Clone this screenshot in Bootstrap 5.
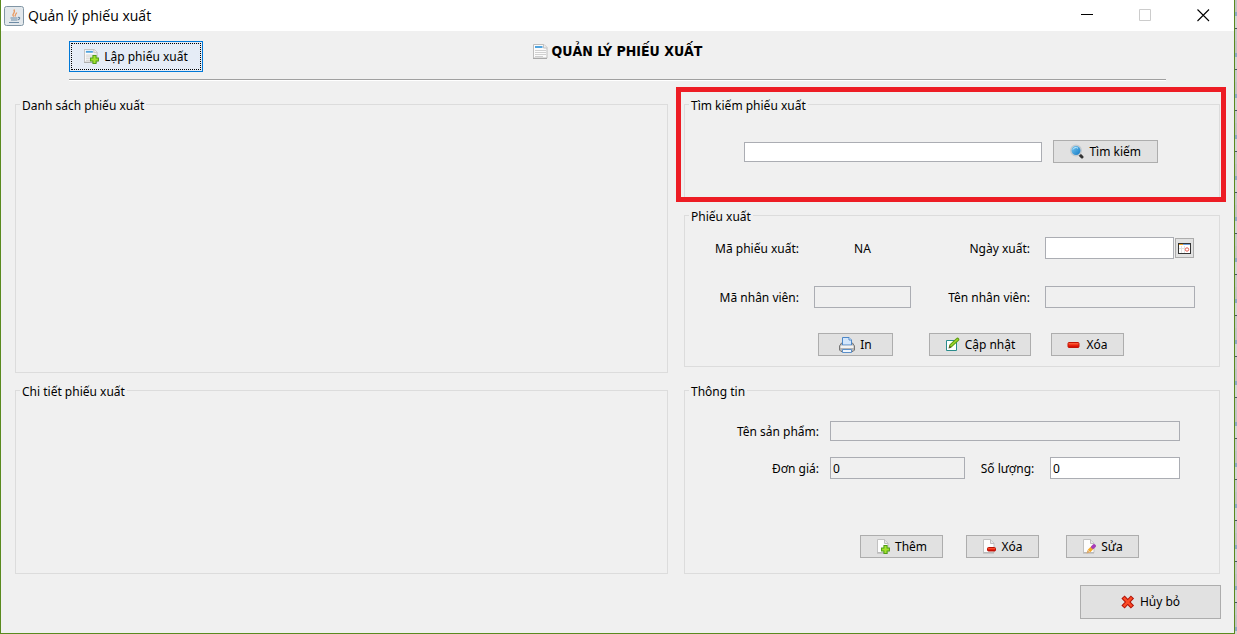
<!DOCTYPE html>
<html lang="vi">
<head>
<meta charset="utf-8">
<meta name="viewport" content="width=device-width, initial-scale=1">
<title>Quản lý phiếu xuất</title>
<link href="https://cdn.jsdelivr.net/npm/bootstrap@5.3.0/dist/css/bootstrap.min.css" rel="stylesheet">
<style>
  body {
    min-height: 100vh;
    padding-right: 2px;
    font: 12px/16px "Noto Sans", "DejaVu Sans", sans-serif;
    color: #000;
    background: repeating-linear-gradient(#c3c3c3 0 12px, #8fa9c4 12px 16px, #d4d4d4 16px 28px, #4b5560 28px 29px, #c8c8c8 29px 41px);
  }
  .app-window { min-height: 100vh; background: #f0f0f0; border: 1px solid #5a8a1e; border-top: 0; }
  .title-bar { height: 31px; background: #fff; padding: 0 2px 0 3px; }
  .title-text { font: 14px/20px "Open Sans", "Noto Sans", sans-serif; }
  .win-ctl { width: 58px; height: 31px; padding: 0; border: 0; background: none; display: grid; place-items: center; }
  .win-ctl:disabled { opacity: 1; }
  .tool-header { display: grid; grid-template-columns: 1fr auto 1fr; align-items: start; margin: 0 68px; padding: 10px 0 7px; border-bottom: 1px solid #a0a0a0; box-shadow: 0 1px #fff; }
  .page-heading { font: bold 14px/20px "DejaVu Sans Condensed", "DejaVu Sans", sans-serif; margin: 0; }
  .panels { display: grid; grid-template-columns: 653fr 536fr; column-gap: 16px; padding: 7px 14px 0; }
  .list-panel { margin-top: 8px; }
  fieldset.group { border: 1px solid #dcdcdc; }
  .group > legend { float: none; width: auto; margin: 0 0 0 4px; padding: 4px 2px 0; font-size: 12px; line-height: 14px; }
  .right-stack { padding-bottom: 6px; }
  .highlight { margin: 0 -6px 4px -8px; padding: 3px 1px 0 3px; border: 5px solid #ed1c24; }
  .highlight .group { border-bottom: 0; }
  .search-form { padding: 27px 61px 34px 59px; gap: 11px; }
  .slip-grid { display: grid; grid-template-columns: 100px 97fr 104px 150fr; gap: 27px 15px; padding: 13px 24px 0 14px; }
  .info-grid { display: grid; grid-template-columns: 100px 135fr 63px 130fr; gap: 16px 11px; padding: 22px 39px 0 34px; }
  .slip-grid > label, .slip-grid > span, .slip-grid > output, .info-grid > label { padding-top: 2px; }
  .span-rest { grid-column: span 3; }
  .form-control { min-width: 0; height: 22px; min-height: 0; padding: 0 2px; font-size: 12px; line-height: 16px; color: #000; background: #fff; border: 1px solid #abadb3; border-radius: 0; }
  .form-control[readonly] { background: #f0f0f0; }
  .form-control.slim { height: 20px; }
  .push { display: inline-flex; align-items: center; justify-content: center; gap: 5px; height: 23px; padding: 0; font-size: 12px; line-height: 16px; white-space: nowrap; color: #000; background: #e1e1e1; border: 1px solid #adadad; border-radius: 0; }
  .push svg, .page-heading svg { flex: none; }
  .push.w-a { width: 73px; }
  .push.w-in { width: 75px; }
  .push.w-b { width: 83px; }
  .push.w-c { width: 102px; flex: none; }
  .push.is-default { width: 134px; height: 31px; background: #e5ecf6; border-color: #0078d7; outline: 1px dotted #000; outline-offset: -3px; }
  .push.cancel { width: 141px; height: 34px; }
  .push.date-btn { width: 19px; height: 20px; margin: 0 1px; flex: none; }
  .slip-actions { padding: 25px 95px 10px 0; gap: 20px; }
  .slip-actions .w-in { margin-right: 16px; }
  .info-actions { padding: 56px 80px 15px 0; gap: 23px; }
  .bottom-bar { padding: 11px 13px 14px; }
</style>
</head>
<body>
<svg width="0" height="0" class="position-absolute" aria-hidden="true">
  <defs>
    <linearGradient id="lens" x1="0" y1="0" x2="1" y2="1"><stop offset="0" stop-color="#7fd0f7"/><stop offset="1" stop-color="#0a72c0"/></linearGradient>
    <linearGradient id="redbar" x1="0" y1="0" x2="0" y2="1"><stop offset="0" stop-color="#ff7a50"/><stop offset=".5" stop-color="#f02a10"/><stop offset="1" stop-color="#c80000"/></linearGradient>
    <symbol id="i-plus" viewBox="0 0 8 8"><path d="M2.600.5h2.800v2.100h2.100v2.800H5.400v2.100H2.600V5.400H.5V2.600h2.100z" fill="#a4e32c" stroke="#4f9c18" stroke-width=".9"/></symbol>
    <symbol id="i-doc" viewBox="0 0 15 15"><path d="M.5.5h10.500l3 3v10.500H.5z" fill="#fbfbfb" stroke="#bdbdbd"/><path d="M10.500.5v3.500h3.500" fill="#eee" stroke="#c0c0c0"/><path d="M2 2h7.500v2H2z" fill="#4fa3de"/><path d="M2 6.500h11M2 8.500h11M2 10.500h11M2 12.500h8" stroke="#d0d0d0"/><path d="M0 14.500h14" stroke="#a9a9a9"/></symbol>
    <symbol id="i-page" viewBox="0 0 14 15"><path d="M1.500.5h7l3.500 3.500v9.500H1.500z" fill="#fdfdfd" stroke="#c2c2c2"/><path d="M8.500.5v4h3.500" fill="#e6e6e6" stroke="#bdbdbd"/><path d="M1 14h11" stroke="#b0b0b0"/></symbol>
  </defs>
</svg>

<div class="app-window d-flex flex-column">
  <header class="title-bar d-flex align-items-center">
    <svg width="20" height="20" viewBox="0 0 20 20" aria-hidden="true"><rect x=".5" y=".5" width="19" height="19" rx="2" fill="#e3e8ec" stroke="#8296a5"/><path d="M10 10.500C6.500 8.500 12.500 7 9.800 3.500M11.500 10.500c-1.500-2 1.500-2.500 1-4" fill="none" stroke="#e89a62" stroke-width="1.300"/><path d="M6.500 12h7M7 14h6M5 16.500h10M14 11.500c2.500-.5 2 2-.5 2.500" fill="none" stroke="#6d8ba5" stroke-width="1.200"/></svg>
    <span class="title-text ms-1 me-auto">Quản lý phiếu xuất</span>
    <button class="win-ctl" type="button" aria-label="Thu nhỏ"><svg width="13" height="13" viewBox="0 0 13 13"><path d="M0 5.500h12" stroke="#000"/></svg></button>
    <button class="win-ctl" type="button" aria-label="Phóng to" disabled><svg width="13" height="13" viewBox="0 0 13 13"><path d="M.5.5h11v11H.5z" fill="none" stroke="#ccc"/></svg></button>
    <button class="win-ctl" type="button" aria-label="Đóng"><svg width="13" height="13" viewBox="0 0 13 13"><path d="M.5.5l11.500 11.500M12 .5L.5 12" stroke="#000" stroke-width="1.100"/></svg></button>
  </header>

  <div class="tool-header">
    <div class="d-flex"><button class="push is-default" type="button"><svg width="15" height="15" viewBox="0 0 15 15"><use href="#i-doc" width="14" height="14"/><use href="#i-plus" x="6" y="6" width="9" height="9"/></svg>Lập phiếu xuất</button></div>
    <h1 class="page-heading d-flex align-items-center gap-1"><svg width="15" height="15"><use href="#i-doc"/></svg>QUẢN LÝ PHIẾU XUẤT</h1>
  </div>

  <main class="panels">
    <fieldset class="group list-panel"><legend>Danh sách phiếu xuất</legend></fieldset>

    <div class="right-stack">
      <div class="highlight">
        <fieldset class="group">
          <legend>Tìm kiếm phiếu xuất</legend>
          <form class="search-form d-flex align-items-center">
            <input class="form-control slim" type="text" aria-label="Tìm kiếm phiếu xuất">
            <button class="push px-3" type="button"><svg width="14" height="15" viewBox="0 0 14 15"><path d="M9.500 10.500l2.500 2.500" stroke="#333" stroke-width="3" stroke-linecap="round"/><circle cx="6" cy="6.500" r="5.200" fill="url(#lens)" stroke="#c4cacf" stroke-width="1.500"/><path d="M3 5.500c.6-1.800 3-2.600 5-1.300" fill="none" stroke="#c5ecff"/></svg>Tìm kiếm</button>
          </form>
        </fieldset>
      </div>

      <fieldset class="group">
        <legend>Phiếu xuất</legend>
        <div class="slip-grid align-items-center">
          <span class="text-end">Mã phiếu xuất:</span>
          <output class="text-center">NA</output>
          <label class="text-end" for="ngay">Ngày xuất:</label>
          <div class="d-flex align-items-center"><input class="form-control" type="text" id="ngay"><button class="push date-btn" type="button" aria-label="Chọn ngày"><svg width="13" height="11" viewBox="0 0 13 11"><rect x=".5" y=".5" width="12" height="10" fill="#fff" stroke="#333"/><path d="M1 1.500h4" stroke="#f0a020"/><path d="M5 1.500h7" stroke="#6fa0dc"/><path d="M3.500 3v7M6.500 3v7M1 5.500h6" stroke="#e2e2e2"/><circle cx="9" cy="6.500" r="1.700" fill="#fff" stroke="#e85a50"/></svg></button></div>
          <label class="text-end" for="manv">Mã nhân viên:</label>
          <input class="form-control" type="text" id="manv" readonly>
          <label class="text-end" for="tennv">Tên nhân viên:</label>
          <input class="form-control" type="text" id="tennv" readonly>
        </div>
        <div class="slip-actions d-flex justify-content-end">
          <button class="push w-in" type="button"><svg width="16" height="16" viewBox="0 0 16 16"><path d="M2.500 6h11l2 3v4l-1.500 1.500H2L.5 13V9z" fill="#b4b4b4" stroke="#777"/><path d="M3.500 8V.5h6.500l2.500 2.500v5z" fill="#d3e6fb" stroke="#4d87c7"/><path d="M10 .5V3h2.500" fill="#fff" stroke="#4d87c7"/><path d="M1.500 8.500h13v2.500h-13z" fill="#f3f3f3"/><path d="M3.500 12.500h9v3h-9z" fill="#eef5fd" stroke="#5b8fc9"/></svg>In</button>
          <button class="push w-c" type="button"><svg width="15" height="15" viewBox="0 0 15 15"><path d="M1.500 3.500h10v10h-10z" fill="#fff" stroke="#2a8c8c"/><path d="M6 8.500L12.500 2.500" stroke="#5d9c12" stroke-width="3.600" stroke-linecap="round"/><path d="M6 8.500L12.500 2.500" stroke="#9fd62c" stroke-width="1.600" stroke-linecap="round"/><path d="M3.500 11.500l.8-3 2.200 2.200z" fill="#5b5b2a"/></svg>Cập nhật</button>
          <button class="push w-a" type="button"><svg width="14" height="14" viewBox="0 0 14 14"><rect x="1" y="4.500" width="11" height="5" rx="1" fill="url(#redbar)" stroke="#c31506"/></svg>Xóa</button>
        </div>
      </fieldset>
    </div>

    <fieldset class="group list-panel"><legend>Chi tiết phiếu xuất</legend></fieldset>

    <fieldset class="group list-panel">
      <legend>Thông tin</legend>
      <div class="info-grid align-items-center">
        <label class="text-end" for="tensp">Tên sản phẩm:</label>
        <input class="form-control slim span-rest" type="text" id="tensp" readonly>
        <label class="text-end" for="dongia">Đơn giá:</label>
        <input class="form-control" type="text" id="dongia" value="0" readonly>
        <label class="text-center" for="soluong">Số lượng:</label>
        <input class="form-control" type="text" id="soluong" value="0">
      </div>
      <div class="info-actions d-flex justify-content-end">
        <button class="push w-b" type="button"><svg width="14" height="15" viewBox="0 0 14 15"><use href="#i-page" width="14" height="15"/><use href="#i-plus" x="5" y="6" width="9" height="9"/></svg>Thêm</button>
        <button class="push w-a me-1" type="button"><svg width="14" height="15" viewBox="0 0 14 15"><use href="#i-page" width="14" height="15"/><rect x="5.500" y="8.500" width="8" height="3.500" rx="1" fill="url(#redbar)" stroke="#b81206"/></svg>Xóa</button>
        <button class="push w-a" type="button"><svg width="14" height="15" viewBox="0 0 14 15"><use href="#i-page" width="14" height="15"/><path d="M7 12l4-4" stroke="#f3a928" stroke-width="3.500"/><path d="M11 8l1-1" stroke="#a63cb8" stroke-width="3.800" stroke-linecap="round"/><path d="M4.500 14.500l1-3.500 2.500 2.500z" fill="#dba86a"/></svg>Sửa</button>
      </div>
    </fieldset>
  </main>

  <footer class="bottom-bar d-flex justify-content-end mb-auto">
    <button class="push cancel" type="button"><svg width="14" height="14" viewBox="0 0 14 14"><path d="M3.500 3.500l6.500 7M10 3.500l-6.500 7" stroke="#b01208" stroke-width="4.400" stroke-linecap="square"/><path d="M3.500 3.500l6.500 7M10 3.500l-6.500 7" stroke="#fb4a26" stroke-width="2.400" stroke-linecap="square"/></svg>Hủy bỏ</button>
  </footer>
</div>
<script src="https://cdn.jsdelivr.net/npm/bootstrap@5.3.0/dist/js/bootstrap.bundle.min.js"></script>
</body>
</html>
